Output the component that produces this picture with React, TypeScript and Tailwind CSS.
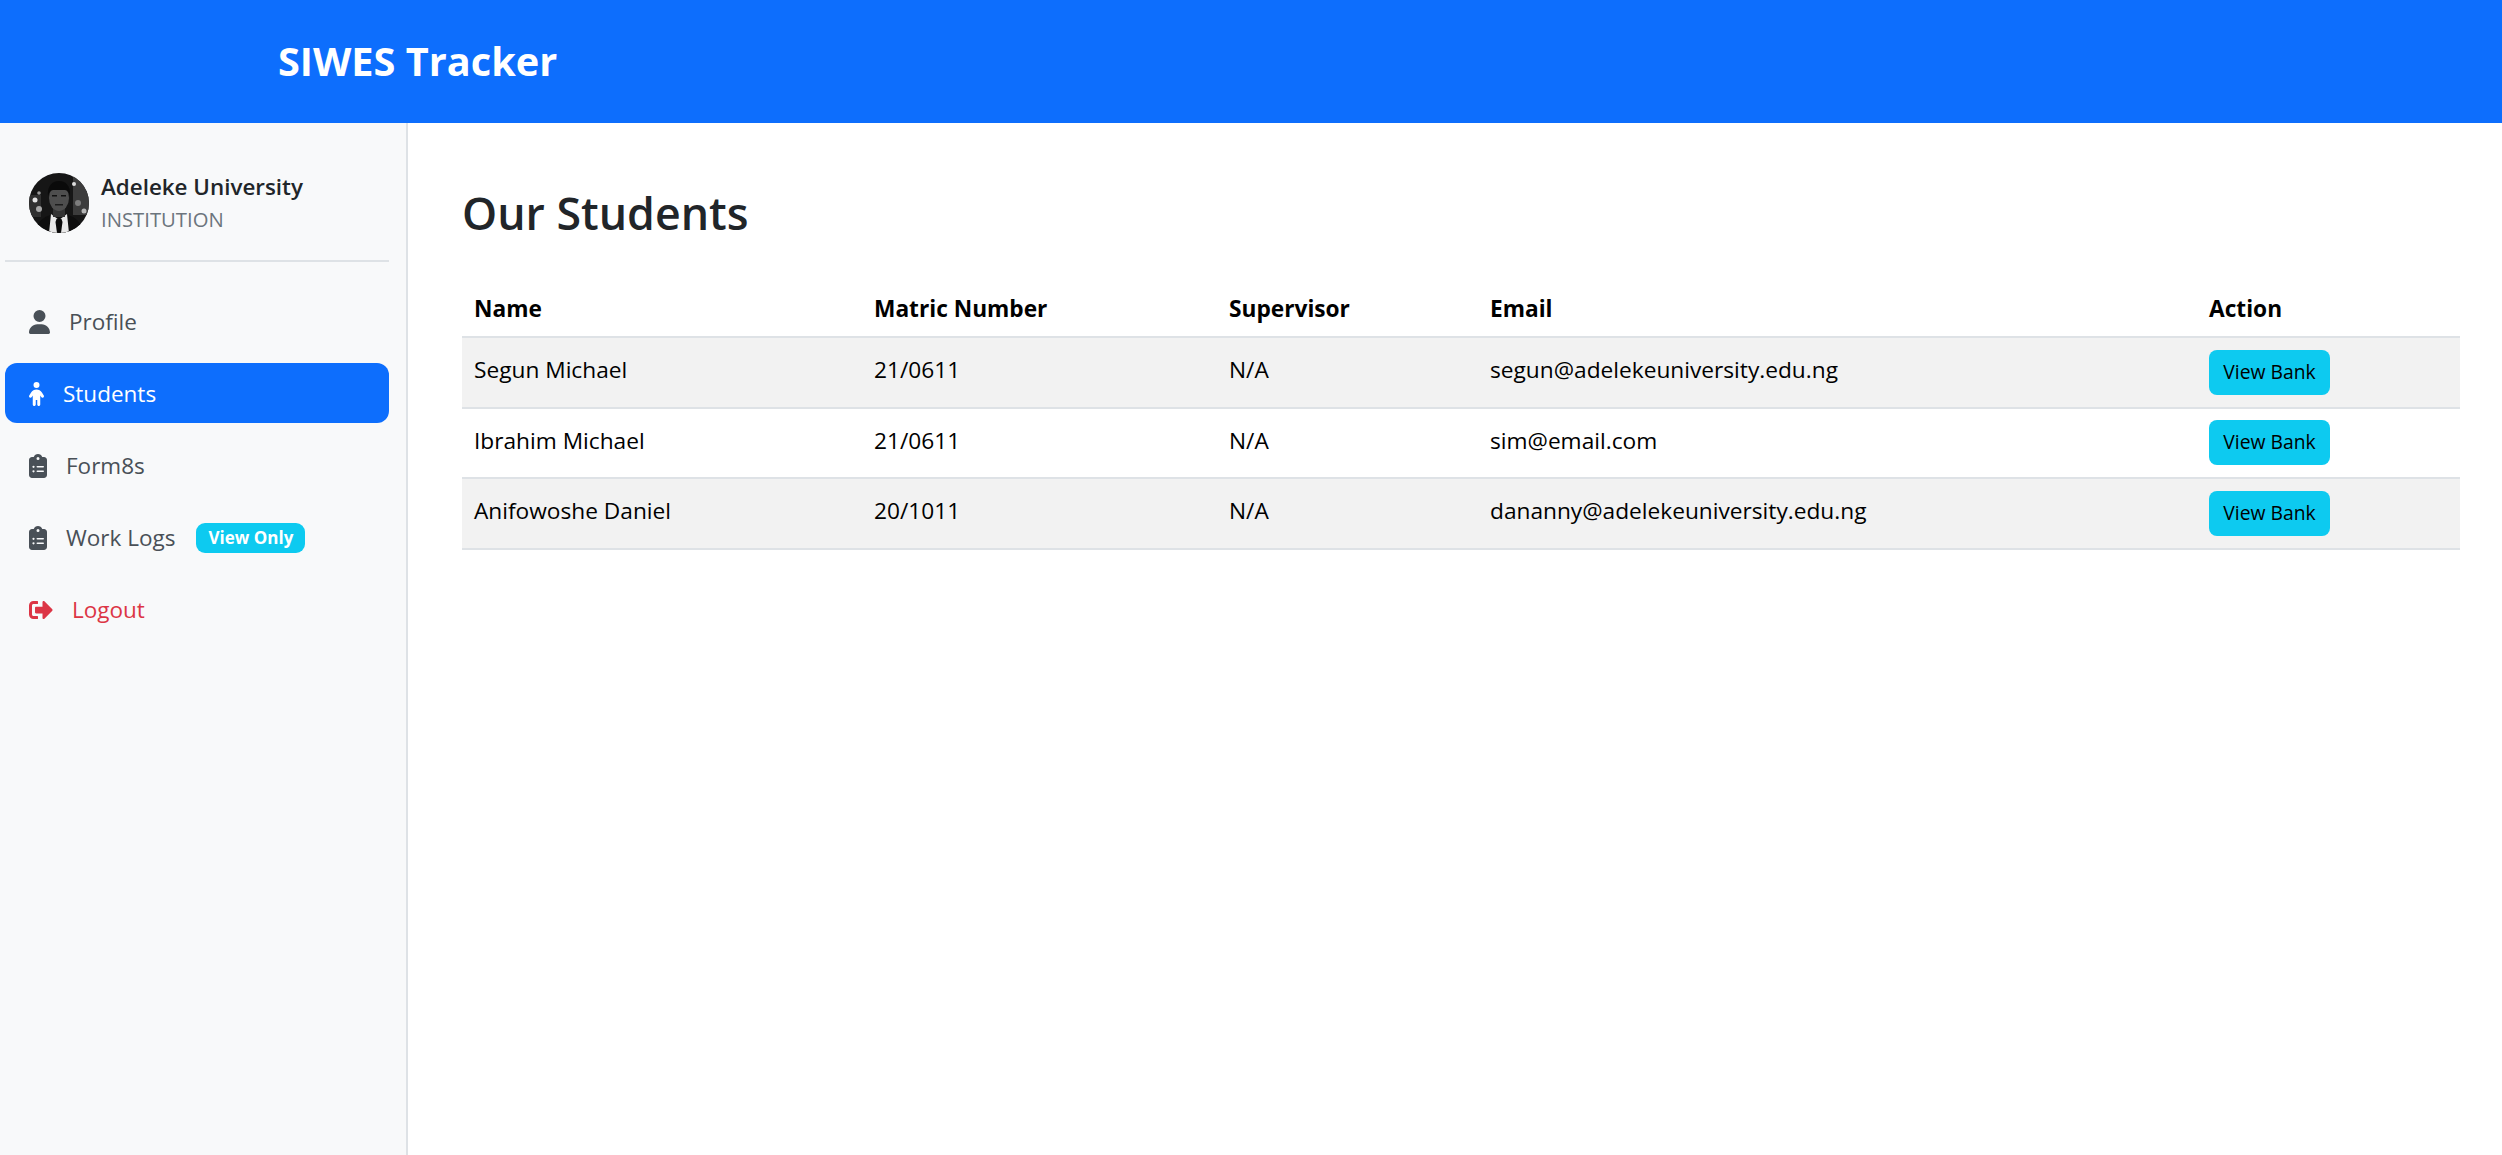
import { FaSignOutAlt } from "react-icons/fa"
import { FaChild, FaClipboardList, FaUser } from "react-icons/fa6"

const students = [
  { name: "Segun Michael", matric: "21/0611", supervisor: "N/A", email: "segun@adelekeuniversity.edu.ng" },
  { name: "Ibrahim Michael", matric: "21/0611", supervisor: "N/A", email: "sim@email.com" },
  { name: "Anifowoshe Daniel", matric: "20/1011", supervisor: "N/A", email: "dananny@adelekeuniversity.edu.ng" },
]

function Avatar() {
  return (
    <svg viewBox="0 0 60 60" className="w-[60px] h-[60px] shrink-0 rounded-full">
      <rect width="60" height="60" fill="#161616" />
      <rect x="44" y="0" width="16" height="42" fill="#3c3c3c" />
      <rect x="0" y="22" width="12" height="22" fill="#303030" />
      <circle cx="6" cy="27" r="2.5" fill="#e4e4e4" />
      <circle cx="10" cy="20" r="1.8" fill="#9a9a9a" />
      <circle cx="10" cy="36" r="3" fill="#a8a8a8" />
      <circle cx="45" cy="11" r="2" fill="#dddddd" />
      <circle cx="49" cy="30" r="3" fill="#7d7d7d" />
      <circle cx="55" cy="38" r="2.5" fill="#b5b5b5" />
      <path d="M6 60c1-11 9-16 15-18h18c7 2 14 7 15 18z" fill="#0e0e0e" />
      <path d="M22 41l8 6 8-6 2 19H20z" fill="#e8e8e8" />
      <path d="M27.500 46h5l1 3-1.500 11h-4L26.500 49z" fill="#0a0a0a" />
      <rect x="24" y="32" width="12" height="12" fill="#333333" />
      <ellipse cx="30" cy="25" rx="10" ry="13" fill="#4e4e4e" />
      <path d="M19 23C18 12 24 8 30 8s12 4 11 15c-1-4-3-6-5-6H24c-2 0-4 2-5 6z" fill="#0a0a0a" />
      <rect x="23" y="22" width="5" height="1.500" fill="#111111" />
      <rect x="32" y="22" width="5" height="1.500" fill="#111111" />
      <rect x="26" y="31" width="8" height="1.500" fill="#1c1c1c" />
    </svg>
  )
}

export default function App() {
  return (
    <div className="h-screen flex flex-col bg-white font-['Open_Sans',sans-serif] text-[#212529] overflow-hidden">
      <header className="h-[123px] shrink-0 bg-[#0d6efd] flex items-center pl-[278px]">
        <h1 className="text-[39.7px] font-bold text-white">SIWES Tracker</h1>
      </header>

      <div className="flex flex-1 min-h-0">
        <aside className="w-[408px] shrink-0 bg-[#f8f9fa] border-r-2 border-[#dee2e6] pl-[5px] pr-[17px]">
          <div className="flex items-center gap-3 h-[139px] pl-6 pt-[24px] pb-px border-b-2 border-[#dee2e6]">
            <Avatar />
            <div>
              <div className="text-[22.4px] leading-[32px] font-semibold">Adeleke University</div>
              <div className="text-[20.3px] leading-[33px] text-[#6c757d]">INSTITUTION</div>
            </div>
          </div>

          <nav className="mt-[29px] flex flex-col gap-3 text-[22.5px] text-[#495057]">
            <a className="h-[60px] flex items-center pl-6 pt-[2px] gap-[19px]">
              <FaUser className="w-[21px] h-[24px]" />
              Profile
            </a>
            <a className="h-[60px] flex items-center pl-6 pt-[2px] gap-[19px] bg-[#0d6efd] text-white rounded-xl">
              <FaChild className="w-[15px] h-[24px]" />
              Students
            </a>
            <a className="h-[60px] flex items-center pl-6 pt-[2px] gap-[19px]">
              <FaClipboardList className="w-[18px] h-[24px]" />
              Form8s
            </a>
            <a className="h-[60px] flex items-center pl-6 pt-[2px] gap-[19px]">
              <FaClipboardList className="w-[18px] h-[24px]" />
              Work Logs
              <span className="ml-[2px] h-[30px] w-[109px] flex items-center justify-center rounded-[9px] bg-[#0dcaf0] text-white text-[17px] font-bold">
                View Only
              </span>
            </a>
            <a className="h-[60px] flex items-center pl-6 pt-[2px] gap-[19px] text-[#dc3545]">
              <FaSignOutAlt className="w-[24px] h-[24px]" />
              Logout
            </a>
          </nav>
        </aside>

        <main className="flex-1 pl-[54px] pr-[42px]">
          <h2 className="mt-[61px] text-[44.7px] leading-[58px] font-semibold">Our Students</h2>

          <table className="mt-[40px] w-full table-fixed border-collapse text-black text-[22.7px]">
            <thead>
              <tr className="border-b-2 border-[#dee2e6] h-[55px] font-bold">
                <th className="w-[400px] px-3 text-left">Name</th>
                <th className="w-[355px] px-3 text-left">Matric Number</th>
                <th className="w-[261px] px-3 text-left">Supervisor</th>
                <th className="w-[719px] px-3 text-left">Email</th>
                <th className="px-3 text-left">Action</th>
              </tr>
            </thead>
            <tbody>
              {students.map((s, i) => (
                <tr key={s.name} className={`border-b-2 border-[#dee2e6] h-[70.5px] ${i % 2 === 0 ? "bg-[#f2f2f2]" : "bg-white"}`}>
                  <td className="px-3 align-top pt-[15px]">{s.name}</td>
                  <td className="px-3 align-top pt-[15px]">{s.matric}</td>
                  <td className="px-3 align-top pt-[15px]">{s.supervisor}</td>
                  <td className="px-3 align-top pt-[15px]">{s.email}</td>
                  <td className="px-3 align-middle">
                    <button className="w-[121px] h-[45px] rounded-lg bg-[#0dcaf0] text-[19.3px] text-black">View Bank</button>
                  </td>
                </tr>
              ))}
            </tbody>
          </table>
        </main>
      </div>
    </div>
  )
}
